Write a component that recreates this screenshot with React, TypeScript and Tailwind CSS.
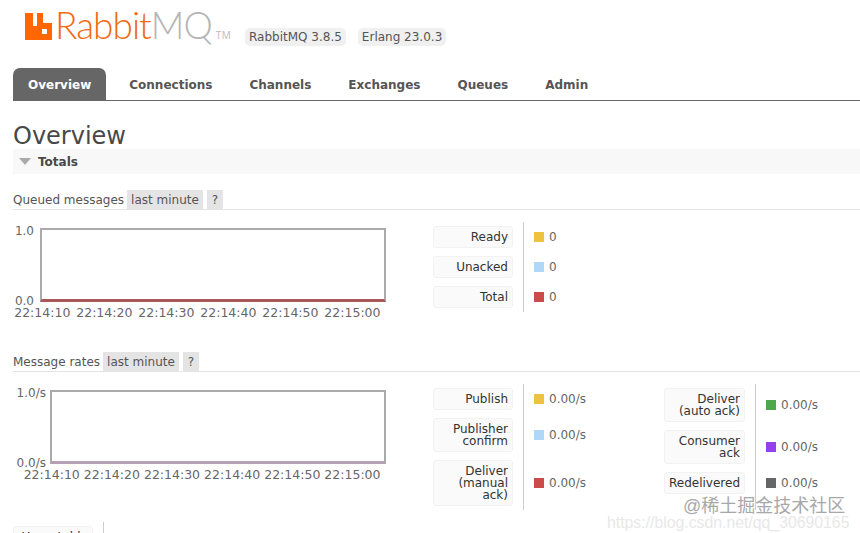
const font = { fontFamily: '"DejaVu Sans", Verdana, sans-serif' };

const tabs = ['Overview', 'Connections', 'Channels', 'Exchanges', 'Queues', 'Admin'];
const ticks = ['22:14:10', '22:14:20', '22:14:30', '22:14:40', '22:14:50', '22:15:00'];

const Logo = () => (
  <div className="flex w-[204px] shrink-0 items-start">
    <svg width="27" height="27" viewBox="0 0 27 27" className="mt-[13px] shrink-0">
      <path d="M0 0h8v13h4V0h6v10h9v17H0z" fill="#ff6600" />
      <rect x="17" y="16" width="5" height="5" fill="#fff" />
    </svg>
    <div className="ml-[3px] mt-[3px] text-[37px] leading-[44px] font-light tracking-[-1px] font-['Lato',sans-serif]">
      <span className="text-[#f26a10]">Rabbit</span>
      <span className="text-[#b5b5b5]">MQ</span>
    </div>
    <span className="ml-[4px] mt-[29px] text-[10px] leading-[12px] tracking-[0.5px] text-[#bbb] font-['Open_Sans',sans-serif]">TM</span>
  </div>
);

const Chip = ({ children }: { children: string }) => (
  <span className="rounded-[5px] bg-[#f0f0f0] px-1 py-[2px] text-[12px] leading-[14px] text-[#555]">{children}</span>
);

const SectionTitle = ({ title }: { title: string }) => (
  <div className="flex h-[20px] items-stretch border-b border-[#e4e4e4] text-[12px] leading-[21px] text-[#555]">
    <span>{title}</span>
    <span className="ml-[3px] bg-[#e4e4e4] px-1">last minute</span>
    <span className="ml-1 bg-[#e4e4e4] px-[5px]">?</span>
  </div>
);

const Chart = ({ top, bottom, plotWidth, labelGap, tickGap, line }: { top: string; bottom: string; plotWidth: string; labelGap: string; tickGap: string; line: string }) => (
  <div className="w-[373px] shrink-0 text-[12px] leading-[12px] text-[#666]">
    <div className="flex justify-end">
      <div className={`mt-[3px] flex h-[82px] flex-col justify-between text-right ${labelGap}`}>
        <span>{top}</span>
        <span>{bottom}</span>
      </div>
      <div className={`${plotWidth} mt-[6px] h-[74px] border-2 border-b-[3px] border-[#aaa] ${line} bg-white`} />
    </div>
    <div className={`flex justify-end pr-[5.500px] text-[12.500px] ${tickGap}`}>
      {ticks.map((t) => <span key={t}>{t}</span>)}
    </div>
  </div>
);

type Row = { label: string[]; color: string; h: number; value: string };

const Legend = ({ rows, labelWidth }: { rows: Row[]; labelWidth: string }) => (
  <div className="flex">
    <div className="flex flex-col gap-[8px] border-r border-[#ccc] py-[4px] pr-[10px]">
      {rows.map((r) => (
        <div key={r.label.join()} className={`${labelWidth} rounded-[3px] border border-[#f2f2f2] bg-[#fafafa] px-[4px] py-[4px] text-right text-[12px] leading-[12px] text-[#333]`}>
          {r.label.map((l) => <div key={l}>{l}</div>)}
        </div>
      ))}
    </div>
    <div className="flex flex-col gap-[8px] py-[4px] pl-[10px]">
      {rows.map((r) => (
        <div key={r.label.join()} className="flex items-center gap-[5px] text-[12px] leading-[14px] text-[#666]" style={{ height: r.h }}>
          <span className={`h-[10px] w-[10px] ${r.color}`} />
          <span>{r.value}</span>
        </div>
      ))}
    </div>
  </div>
);

export default function App() {
  return (
    <div className="relative h-[533px] w-[860px] overflow-hidden bg-white" style={font}>
      <header className="flex h-[54px] items-start pl-[25px]">
        <Logo />
        <div className="ml-[16px] mt-[28px] flex gap-[12px]">
          <Chip>RabbitMQ 3.8.5</Chip>
          <Chip>Erlang 23.0.3</Chip>
        </div>
      </header>

      <nav className="ml-[13px] mt-[14px] flex h-[33px] items-stretch gap-[2px] border-b border-[#666] text-[12px] font-bold text-[#555]">
        {tabs.map((t, i) => (
          <span
            key={t}
            className={i === 0
              ? 'mr-[3.500px] flex items-center rounded-t-[7px] bg-[#666] px-[15px] pt-[1px] text-white'
              : 'flex items-center px-[17.500px] pt-[1px]'}
          >
            {t}
          </span>
        ))}
      </nav>

      <main className="pl-[13px]">
        <h1 className="mt-[21px] text-[24px] leading-[28px] text-[#484848]">Overview</h1>
        <div className="-mt-[1px] flex h-[25px] items-center gap-[7px] bg-[#f8f8f8] pl-[6px] text-[12px] font-bold text-[#484848]">
          <svg width="12" height="7" viewBox="0 0 12 7"><path d="M0 0h12L6 7z" fill="#aaa" /></svg>
          <span>Totals</span>
        </div>

        <div className="mt-[16px]"><SectionTitle title="Queued messages" /></div>
        <div className="mt-[12px] flex">
          <Chart top="1.0" bottom="0.0" plotWidth="w-[346px]" labelGap="pr-[6px]" tickGap="gap-[5.900px]" line="border-b-[#a85858]" />
          <div className="ml-[47px]">
            <Legend
              labelWidth="w-[80px]"
              rows={[
                { label: ['Ready'], color: 'bg-[#edc240]', h: 22, value: '0' },
                { label: ['Unacked'], color: 'bg-[#afd8f8]', h: 22, value: '0' },
                { label: ['Total'], color: 'bg-[#cb4b4b]', h: 22, value: '0' },
              ]}
            />
          </div>
        </div>

        <div className="mt-[33px]"><SectionTitle title="Message rates" /></div>
        <div className="mt-[12px] flex">
          <Chart top="1.0/s" bottom="0.0/s" plotWidth="w-[336px]" labelGap="pr-[4px]" tickGap="gap-[4px]" line="border-b-[#b5a0b5]" />
          <div className="ml-[47px] flex">
            <div className="w-[231px]">
              <Legend
                labelWidth="w-[80px]"
                rows={[
                  { label: ['Publish'], color: 'bg-[#edc240]', h: 22, value: '0.00/s' },
                  { label: ['Publisher', 'confirm'], color: 'bg-[#afd8f8]', h: 34, value: '0.00/s' },
                  { label: ['Deliver', '(manual', 'ack)'], color: 'bg-[#cb4b4b]', h: 46, value: '0.00/s' },
                ]}
              />
            </div>
            <Legend
              labelWidth="w-[81px]"
              rows={[
                { label: ['Deliver', '(auto ack)'], color: 'bg-[#4da74d]', h: 34, value: '0.00/s' },
                { label: ['Consumer', 'ack'], color: 'bg-[#9440ed]', h: 34, value: '0.00/s' },
                { label: ['Redelivered'], color: 'bg-[#666666]', h: 22, value: '0.00/s' },
              ]}
            />
          </div>
        </div>

        <div className="mt-[12px] flex">
          <div className="mt-[4px] h-[34px] w-[80px] rounded-[3px] border border-[#f2f2f2] bg-[#fafafa] px-[4px] py-[4px] text-right text-[12px] leading-[12px] text-[#333]">Unroutable</div>
          <div className="ml-[10px] h-[40px] border-l border-[#ccc]" />
        </div>
      </main>

      {/* watermark */}
      <div className="absolute left-[607px] top-[514px] text-[15.800px] leading-[18px] text-[#e8e8e8]" style={{ fontFamily: '"Liberation Sans", sans-serif' }}>https://blog.csdn.net/qq_30690165</div>
      <div className="absolute left-[683px] top-[495px] text-[18px] leading-[22px] text-[#a8a8a8]" style={{ fontFamily: '"Liberation Sans", "Noto Sans CJK SC", sans-serif' }}>@稀土掘金技术社区</div>
    </div>
  );
}
